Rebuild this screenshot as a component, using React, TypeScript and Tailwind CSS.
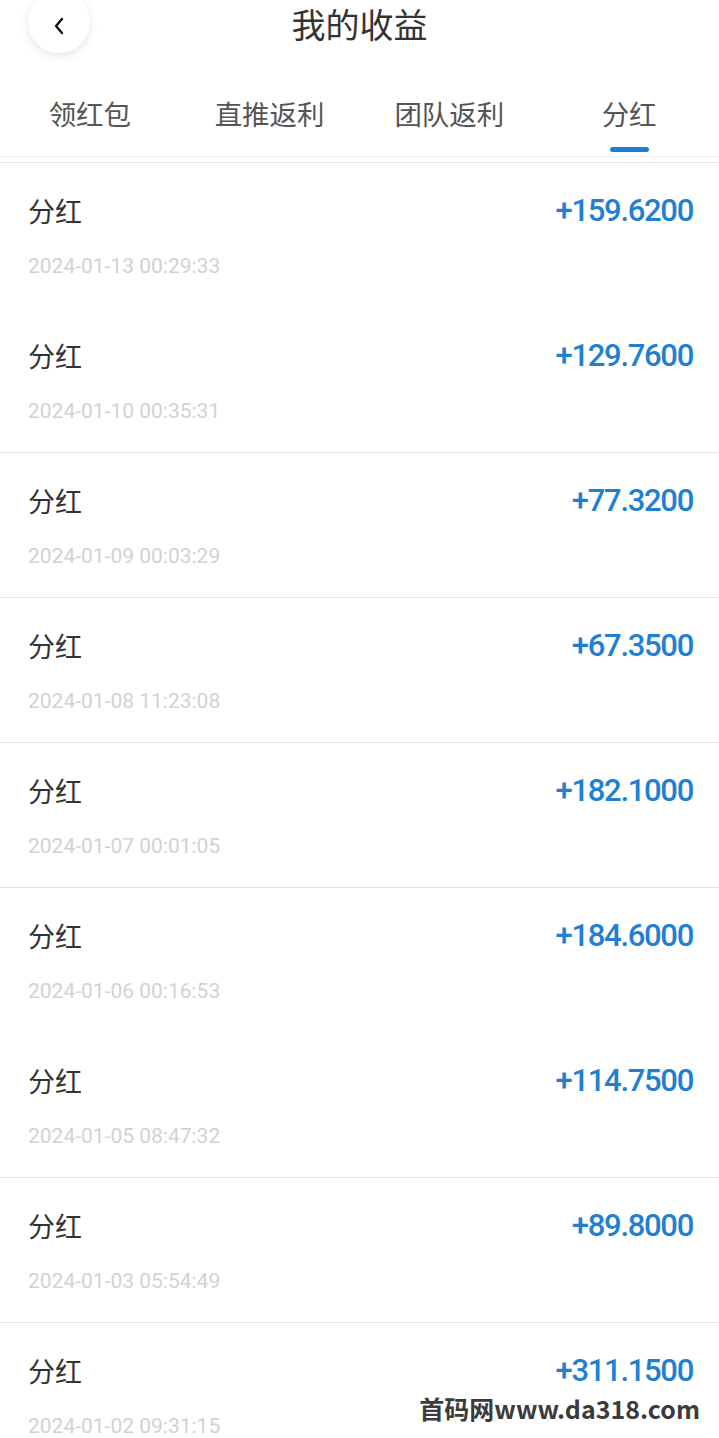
const records = [
  { amount: "+159.6200", time: "2024-01-13 00:29:33" },
  { amount: "+129.7600", time: "2024-01-10 00:35:31" },
  { amount: "+77.3200", time: "2024-01-09 00:03:29" },
  { amount: "+67.3500", time: "2024-01-08 11:23:08" },
  { amount: "+182.1000", time: "2024-01-07 00:01:05" },
  { amount: "+184.6000", time: "2024-01-06 00:16:53" },
  { amount: "+114.7500", time: "2024-01-05 08:47:32" },
  { amount: "+89.8000", time: "2024-01-03 05:54:49" },
  { amount: "+311.1500", time: "2024-01-02 09:31:15" },
];

const tabs = ["领红包", "直推返利", "团队返利", "分红"];

const App = () => {
  return (
    <div className="relative h-[1438px] w-[719px] overflow-hidden bg-white font-['Roboto','Noto_Sans_CJK_SC',sans-serif]">
      {/* top bar */}
      <div className="relative flex h-[52px] items-center justify-center">
        <button className="absolute left-[28px] top-[-9px] flex h-[62px] w-[62px] items-center justify-center rounded-full bg-white shadow-[0_3px_10px_rgba(0,0,0,0.10)]">
          <svg width="14" height="18" viewBox="0 0 14 18" fill="none" className="mt-[8px]">
            <path d="M10 2 L4 9 L10 16" stroke="#111" strokeWidth="2.4" strokeLinecap="round" strokeLinejoin="round" />
          </svg>
        </button>
        <h1 className="mt-[-4px] text-[34px] leading-[40px] text-[#333] font-['Noto_Sans_CJK_SC',sans-serif]">我的收益</h1>
      </div>

      {/* tabs */}
      <div className="grid h-[105px] grid-cols-4 border-b border-[#ececec]">
        {tabs.map((t, i) => (
          <div key={t} className="flex flex-col items-center pt-[44px]">
            <span className="text-[27.5px] leading-[34px] text-[#555] font-['Noto_Sans_CJK_SC',sans-serif]">{t}</span>
            {i === 3 && <span className="mt-[17px] h-[5px] w-[39px] rounded-full bg-[#1a7fd4]" />}
          </div>
        ))}
      </div>
      <div className="h-[6px] border-b border-[#e6e6e6]" />

      {/* list */}
      <div>
        {records.map((r, i) => (
          <div
            key={r.time}
            className={
              i === 0 || i === 5
                ? "h-[145px] pl-[28px] pr-[26px] pt-[31px]"
                : "h-[145px] border-b border-[#e4e4e4] pl-[28px] pr-[26px] pt-[31px]"
            }
          >
            <div className="flex items-center justify-between">
              <span className="text-[27px] leading-[34px] text-[#333] font-['Noto_Sans_CJK_SC',sans-serif]">分红</span>
              <span className="text-[31px] font-medium leading-[34px] tracking-[-1.3px] text-[#1f80d2]">{r.amount}</span>
            </div>
            <div className="mt-[24px] text-[21px] leading-[28px] text-[#d2d2d2]">{r.time}</div>
          </div>
        ))}
      </div>

      {/* watermark */}
      <div className="absolute right-[19px] top-[1390px] text-[25px] font-bold leading-[36px] text-[#3b3b3b] font-['Noto_Sans_CJK_SC',sans-serif]">
        首码网www.da318.com
      </div>
    </div>
  );
};

export default App;
